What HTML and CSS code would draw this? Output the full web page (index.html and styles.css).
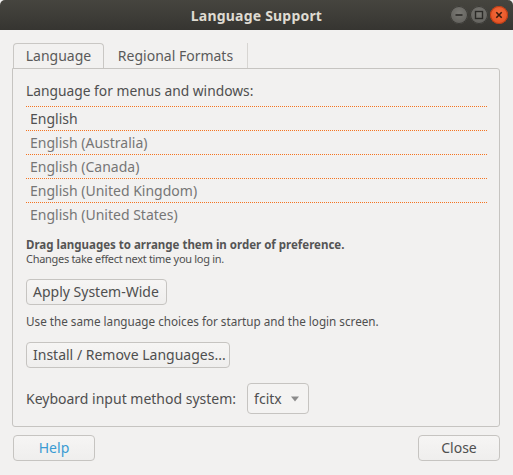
FILE: index.html
```html
<!DOCTYPE html>
<html>
<head>
<meta charset="utf-8">
<link rel="stylesheet" href="styles.css">
</head>
<body>
<div class="window">
  <div class="titlebar">
    <div class="title">Language Support</div>
    <div class="wbtns">
      <span class="wbtn"><svg width="16" height="16" viewBox="0 0 16 16"><line x1="4.5" y1="8" x2="11.5" y2="8" stroke="#2b2a27" stroke-width="1.6"/></svg></span>
      <span class="wbtn"><svg width="16" height="16" viewBox="0 0 16 16"><rect x="4.5" y="4.5" width="7" height="7" fill="none" stroke="#2b2a27" stroke-width="1.4"/></svg></span>
      <span class="wbtn close"><svg width="16" height="16" viewBox="0 0 16 16"><path d="M5.3 5.3 L10.7 10.7 M10.7 5.3 L5.3 10.7" stroke="#3a1a0c" stroke-width="1.6"/></svg></span>
    </div>
  </div>
  <div class="body">
    <div class="tabs">
      <div class="tab active">Language</div>
      <div class="tab">Regional Formats</div>
    </div>
    <div class="frame">
      <div class="label">Language for menus and windows:</div>
      <div class="list">
        <div class="row first">English</div>
        <div class="row">English (Australia)</div>
        <div class="row">English (Canada)</div>
        <div class="row">English (United Kingdom)</div>
        <div class="row last">English (United States)</div>
      </div>
      <div class="hint"><b>Drag languages to arrange them in order of preference.</b><br><span class="small">Changes take effect next time you log in.</span></div>
      <div class="btn apply">Apply System-Wide</div>
      <div class="note">Use the same language choices for startup and the login screen.</div>
      <div class="btn install">Install / Remove Languages...</div>
      <div class="kbd">
        <span class="kbdlabel">Keyboard input method system:</span>
        <span class="combo">fcitx <svg class="arrow" width="10" height="6" viewBox="0 0 10 6"><path d="M1 0.5 H9 L5 5.5 Z" fill="#8b8b8b"/></svg></span>
      </div>
    </div>
    <div class="footer">
      <div class="btn foot help">Help</div>
      <div class="btn foot">Close</div>
    </div>
  </div>
</div>
</body>
</html>
```
FILE: styles.css
```css
html, body {
  margin: 0;
  padding: 0;
}
body {
  width: 513px;
  height: 475px;
  overflow: hidden;
  background: #f2f1f0;
  font-family: "Noto Sans", "DejaVu Sans", sans-serif;
  font-size: 14px;
  color: #4f4f4f;
}
.window {
  width: 513px;
  height: 475px;
  display: flex;
  flex-direction: column;
}
.titlebar {
  height: 30px;
  background: linear-gradient(#46453f, #363531);
  border-radius: 5px 5px 0 0;
  position: relative;
  display: flex;
  align-items: center;
  justify-content: center;
}
.title {
  color: #dfdbd2;
  font-weight: bold;
  font-size: 14px;
  letter-spacing: 0.2px;
}
.wbtns {
  position: absolute;
  right: 5px;
  top: 6px;
  display: flex;
  gap: 2px;
}
.wbtn {
  width: 18px;
  height: 18px;
  border-radius: 50%;
  background: radial-gradient(circle at 50% 40%, #7a7974, #5a5955);
  box-shadow: inset 0 0 0 1px #3a3935;
  display: flex;
  align-items: center;
  justify-content: center;
}
.wbtn svg { width: 16px; height: 16px; }
.wbtn.close {
  background: radial-gradient(circle at 50% 40%, #f36d3e, #e0481a);
  box-shadow: inset 0 0 0 1px #b63c15;
}
.body {
  flex: 1;
  padding: 13px 13px 0 12px;
  display: flex;
  flex-direction: column;
}
.tabs {
  display: flex;
  height: 25px;
  padding-left: 1px;
}
.tab {
  line-height: 25px;
  color: #5a5a5a;
}
.tab.active {
  border: 1px solid #c9c7c4;
  border-bottom: none;
  border-radius: 4px 4px 0 0;
  width: 89px;
  text-align: center;
  line-height: 24px;
}
.tab + .tab {
  border-right: 1px solid #d7d5d2;
  width: 143px;
  text-align: center;
}
.frame {
  box-sizing: border-box;
  border: 1px solid #c6c4c1;
  border-radius: 0 3px 3px 3px;
  height: 359px;
  padding: 10px 12px 0 13px;
}
.label {
  line-height: 24px;
  height: 27px;
  font-size: 13.8px;
}
.list, .row {
  background-image: linear-gradient(to right, #f47421 50%, transparent 50%);
  background-size: 2px 1px;
  background-repeat: repeat-x;
}
.list {
  background-position: left top;
  padding-top: 1px;
}
.row {
  height: 23px;
  line-height: 23px;
  padding-left: 4px;
  padding-bottom: 1px;
  background-position: left bottom;
  color: #767676;
}
.row.first { color: #505050; }
.row.last { background-image: none; }
.hint {
  margin-top: 11px;
  font-size: 11.5px;
  line-height: 14px;
}
.hint b { color: #555; }
.small {
  font-size: 11px;
  letter-spacing: -0.3px;
}
.btn {
  display: block;
  box-sizing: border-box;
  border: 1px solid #c6c4c1;
  border-radius: 4px;
  background: linear-gradient(#f6f5f4, #efeeed);
  height: 26px;
  line-height: 24px;
  padding: 0 6px;
  white-space: nowrap;
  color: #4f4f4f;
}
.apply {
  margin-top: 13px;
  width: 141px;
}
.note {
  margin-top: 9px;
  font-size: 11.7px;
  line-height: 15px;
}
.install {
  margin-top: 13px;
  width: 204px;
}
.kbd {
  margin-top: 15px;
  display: flex;
  align-items: center;
  gap: 11px;
}
.combo {
  box-sizing: border-box;
  border: 1px solid #c6c4c1;
  border-radius: 4px;
  height: 31px;
  line-height: 29px;
  padding: 0 6px;
  width: 62px;
  display: flex;
  align-items: center;
  gap: 8px;
  background: #f4f3f2;
}
.footer {
  display: flex;
  justify-content: space-between;
  margin-top: 8px;
  padding-left: 1px;
}
.foot {
  width: 82px;
  text-align: center;
}
.help { color: #3a9bd3; }
```
